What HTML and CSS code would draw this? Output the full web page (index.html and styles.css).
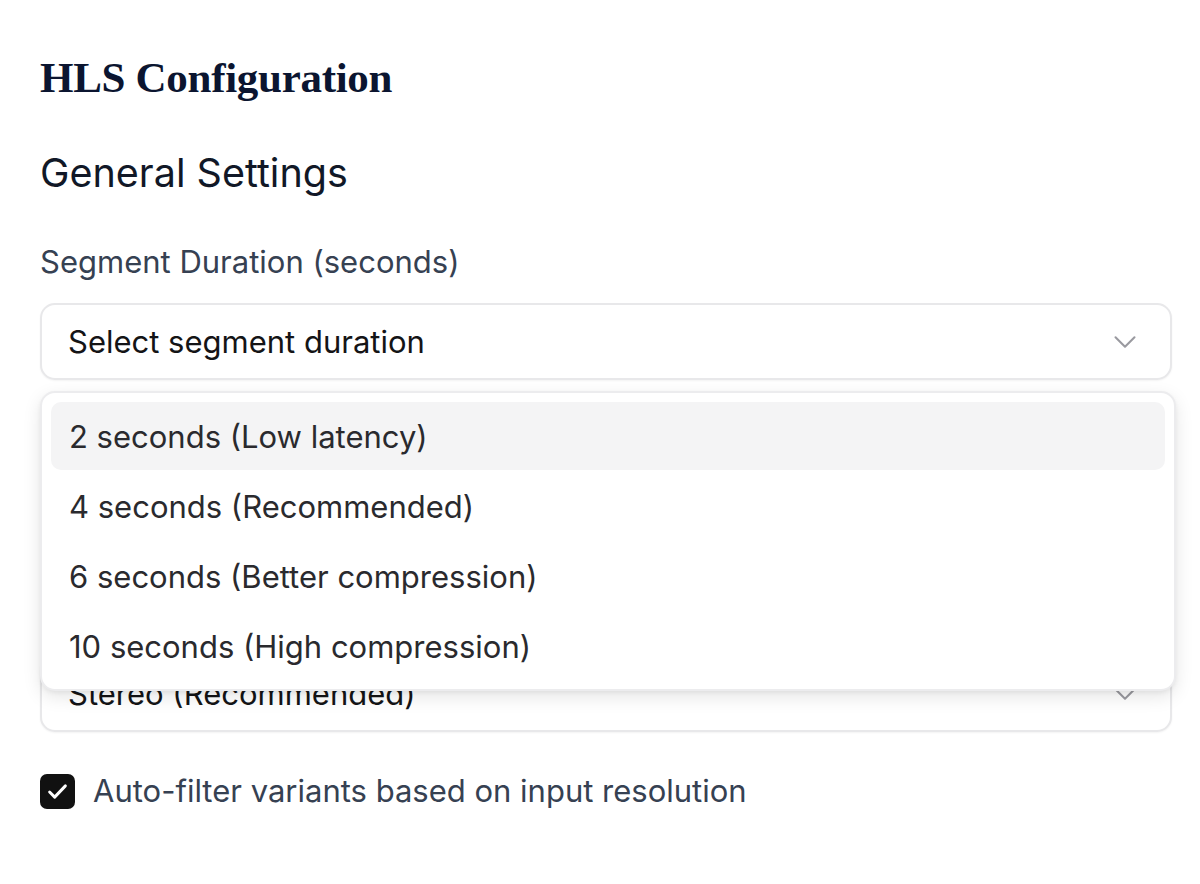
FILE: index.html
```html
<!DOCTYPE html>
<html lang="en">
<head>
<meta charset="utf-8">
<title>HLS Configuration</title>
<link rel="stylesheet" href="styles.css">
</head>
<body>
<main class="page">
  <h1 class="title">HLS Configuration</h1>
  <h2 class="section">General Settings</h2>

  <div class="fields">
    <div class="field field-open">
      <label class="label">Segment Duration (seconds)</label>
      <button class="select">
        <span class="select-text">Select segment duration</span>
        <svg class="chev" viewBox="0 0 24 24" width="24" height="24"><path d="M6 9l6 6 6-6" fill="none" stroke="currentColor" stroke-width="1.3" stroke-linecap="round" stroke-linejoin="round"/></svg>
      </button>
      <div class="menu">
        <div class="option option-active">2 seconds (Low latency)</div>
        <div class="option">4 seconds (Recommended)</div>
        <div class="option">6 seconds (Better compression)</div>
        <div class="option">10 seconds (High compression)</div>
      </div>
    </div>

    <div class="field field-under">
      <button class="select">
        <span class="select-text">Stereo (Recommended)</span>
        <svg class="chev" viewBox="0 0 24 24" width="24" height="24"><path d="M6 9l6 6 6-6" fill="none" stroke="currentColor" stroke-width="1.3" stroke-linecap="round" stroke-linejoin="round"/></svg>
      </button>
    </div>
  </div>

  <label class="check-row">
    <span class="checkbox">
      <svg viewBox="0 0 24 24" width="24" height="24"><path d="M5 12.5l4.5 4.5L19 7" fill="none" stroke="#fff" stroke-width="2.6" stroke-linecap="round" stroke-linejoin="round"/></svg>
    </span>
    <span class="check-text">Auto-filter variants based on input resolution</span>
  </label>
</main>
</body>
</html>
```

FILE: styles.css
```css
* { box-sizing: border-box; }

html, body {
  margin: 0;
  padding: 0;
  background: #ffffff;
}

body {
  font-family: Inter, "Noto Sans", sans-serif;
  color: #0f172a;
}

.page {
  width: 1132px;
  margin-left: 40px;
  padding-top: 52px;
}

.title {
  margin: 0;
  font-family: "Liberation Serif", "Times New Roman", serif;
  font-weight: 700;
  font-size: 43px;
  line-height: 52px;
  letter-spacing: -0.3px;
  color: #0b1530;
}

.section {
  margin: 45px 0 0;
  font-weight: 400;
  font-size: 39.5px;
  line-height: 48px;
  color: #111827;
}

.fields {
  margin-top: 44px;
  display: flex;
  flex-direction: column;
  gap: 37px;
}

.field {
  display: flex;
  flex-direction: column;
  gap: 20px;
}

.field-open {
  position: relative;
  z-index: 5;
}

.field-under {
  padding-top: 238px;
}

.label {
  font-size: 31px;
  line-height: 42px;
  color: #364152;
}

.select {
  display: flex;
  align-items: center;
  justify-content: space-between;
  height: 77px;
  width: 100%;
  padding: 0 26px 0 26px;
  border: 2px solid #e8e8ea;
  border-radius: 15px;
  background: #fff;
  font-family: inherit;
  font-size: 31px;
  color: #141416;
  box-shadow: 0 1px 2px rgba(0,0,0,0.05);
  text-align: left;
}

.chev {
  color: #9a9aa0;
  width: 38px;
  height: 38px;
}

.menu {
  position: absolute;
  left: 0;
  top: 150px;
  width: 1136px;
  padding: 9px 9px;
  background: #fff;
  border: 2px solid #ececee;
  border-radius: 15px;
  box-shadow: 0 6px 18px rgba(0,0,0,0.10), 0 2px 4px rgba(0,0,0,0.05);
  display: flex;
  flex-direction: column;
  gap: 2px;
}

.option {
  height: 68px;
  display: flex;
  align-items: center;
  padding: 0 18px;
  border-radius: 10px;
  font-size: 31px;
  color: #2a2a2e;
}

.option-active {
  background: #f4f4f5;
}

.check-row {
  margin-top: 38px;
  display: flex;
  align-items: center;
  gap: 18px;
}

.checkbox {
  width: 35px;
  height: 35px;
  border-radius: 7px;
  background: #111111;
  display: flex;
  align-items: center;
  justify-content: center;
}

.checkbox svg {
  width: 27px;
  height: 27px;
}

.check-text {
  font-size: 31px;
  line-height: 42px;
  color: #364152;
}
```
